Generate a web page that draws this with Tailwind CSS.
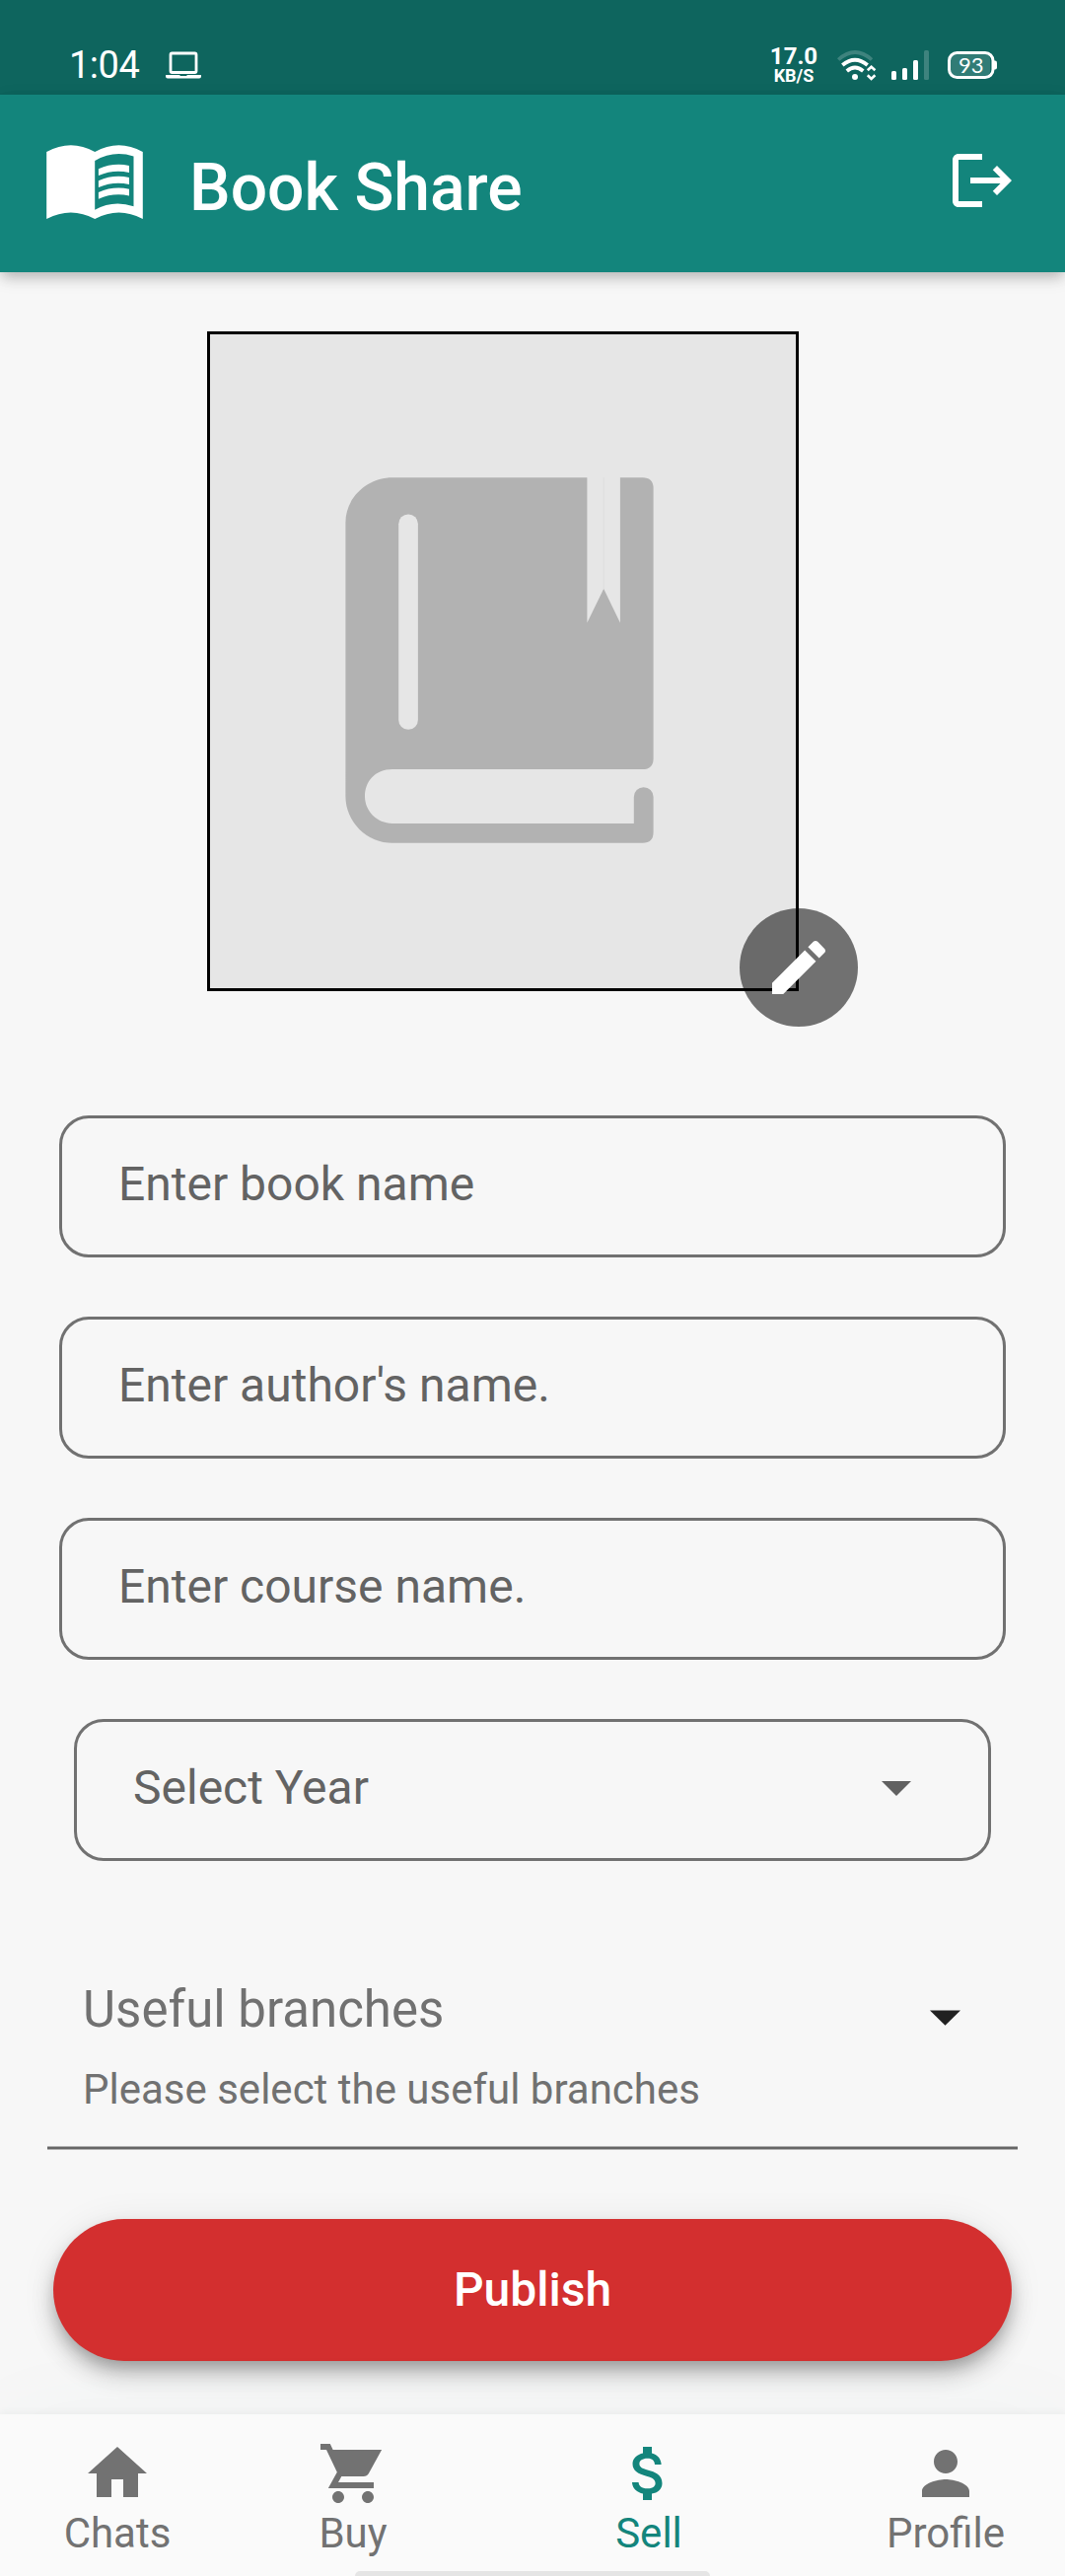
<!DOCTYPE html>
<html lang="en">
<head>
<meta charset="utf-8">
<title>Book Share</title>
<script src="https://cdn.jsdelivr.net/npm/@tailwindcss/browser@4"></script>
</head>
<body class="bg-[#f7f7f7] font-['Roboto',sans-serif]">
<div class="flex h-[2612px] w-[1080px] flex-col overflow-hidden bg-[#f7f7f7]">

  <!-- Status bar -->
  <div class="z-10 flex h-24 shrink-0 items-start bg-[#0e655e] text-white">
    <div class="ml-[70px] mt-[44px] w-[98px] text-[38px] leading-[44px] tracking-[-0.5px]">1:04</div>
    <svg class="mt-[52px]" width="36" height="28" viewBox="0 0 36 28" fill="none">
      <rect x="5" y="2" width="26" height="19.5" rx="1.5" stroke="#fff" stroke-width="2.8"/>
      <path d="M0 24h36v1.5q0 2-2 2H2q-2 0-2-2z" fill="#fff"/>
      <path d="M14.500 24h7v1h-7z" fill="#0e655e"/>
    </svg>
    <div class="ml-[576px] mt-[45px] flex w-[50px] flex-col items-center font-bold">
      <span class="text-[24px] leading-[25px]">17.0</span>
      <span class="text-[18px] leading-[13px]">KB/S</span>
    </div>
    <svg class="ml-[18px] mt-[50px]" width="42" height="33" viewBox="848 50 42 33" fill="none" stroke="#fff">
      <path d="M850.200 60.500Q867 45.500 884 60.500" stroke-width="3.600" stroke-opacity=".2"/>
      <path d="M854.300 66Q867 55.500 879.700 66" stroke-width="3.800"/>
      <path d="M858.800 72Q867 65 875.300 72" stroke-width="3.800"/>
      <circle cx="867" cy="78" r="3" fill="#fff" stroke="none"/>
      <path d="M879.800 71.300l3.800-3.600 3.800 3.600M879.800 76.300l3.800 3.600 3.800-3.600" stroke-width="2.600"/>
    </svg>
    <svg class="ml-[14px] mt-[51px]" width="38" height="30" viewBox="0 0 38 30" fill="#fff">
      <rect x="0" y="21" width="5" height="9" rx="1.500"/>
      <rect x="11" y="18" width="5" height="12" rx="1.500"/>
      <rect x="22" y="10" width="5" height="20" rx="1.500"/>
      <rect x="33" y="0" width="5" height="30" rx="1.500" fill-opacity=".2"/>
    </svg>
    <div class="ml-[19px] mt-[52px] grid">
      <svg class="col-start-1 row-start-1" width="50" height="28" viewBox="0 0 50 28">
        <rect x="2" y="2" width="41" height="24" rx="6" fill="#fff" fill-opacity=".15"/>
        <rect x="1.500" y="1.500" width="44.500" height="25" rx="8" fill="none" stroke="#fff" stroke-width="3"/>
        <path d="M46 9.500h2q2 0 2 2v5q0 2-2 2h-2z" fill="#fff"/>
      </svg>
      <span class="col-start-1 row-start-1 pl-[11px] font-['Lato',sans-serif] text-[22px] leading-[27px]">93</span>
    </div>
  </div>

  <!-- App bar -->
  <header class="z-10 flex h-[180px] shrink-0 items-start bg-[#13857c] text-white shadow-[0_6px_12px_-3px_rgba(0,0,0,0.18),0_9px_15px_rgba(0,0,0,0.08),0_3px_18px_rgba(0,0,0,0.06)]">
    <svg class="ml-[47px] mt-[51px]" width="98" height="76" viewBox="47 147 98 76">
      <path fill="#fff" fill-rule="evenodd" d="M47.200 154Q72 140.500 96.200 154Q120.500 140.500 144.800 154V222Q120.500 209 96.200 222Q72 209 47.200 222ZM96.200 163V212.700Q115 202.500 135.500 209.300V158.500Q115 152 96.200 163Z"/>
      <path fill="#fff" d="M99.900 171.300Q115 164.500 131 168V175Q115 171.500 99.900 178ZM99.900 183.300Q115 176.500 131 180V187Q115 183.500 99.900 190ZM99.900 195Q115 188.300 131 191.700V198.500Q115 195 99.900 201.700Z"/>
    </svg>
    <h1 class="ml-[47px] mt-[55px] text-[66px] font-medium leading-[80px]">Book Share</h1>
    <svg class="ml-auto mr-12 mt-[51px]" width="72" height="72" viewBox="0 0 24 24" fill="#fff">
      <path d="m17 7-1.410 1.410L18.170 11H8v2h10.170l-2.580 2.580L17 17l5-5zM4 5h8V3H4c-1.100 0-2 .9-2 2v14c0 1.100.9 2 2 2h8v-2H4z"/>
    </svg>
  </header>

  <main class="flex grow flex-col px-[60px] pt-[60px]">
    <!-- Cover picker -->
    <div class="relative ml-[150px] h-[669px] w-[600px] border-[3px] border-black bg-[#e6e6e6]">
      <svg class="ml-[137px] mt-[145px]" width="314" height="372" viewBox="350 484 314 372">
        <path fill="#b2b2b2" d="M398 484.300H651.600Q662.600 484.300 662.600 495.300V769Q662.600 780.100 651.600 780.100H398C380 780.100 370 793 370 807.500C370 822 382 834.900 398 834.900H642.800V808A9.900 9.900 0 0 1 662.600 808V843.700Q662.600 854.700 651.600 854.700H398A47.500 47.500 0 0 1 350.400 807.500V530C350.400 504 373 484.300 398 484.300Z"/>
        <rect x="404.200" y="521.500" width="19.700" height="218.300" rx="9.800" fill="#e6e6e6"/>
        <path fill="#e6e6e6" d="M595.400 484H628.900V631.500L612.200 597L595.400 631.500Z"/>
        <path d="M612.200 484V597" stroke="#dcdcdc" stroke-width=".8"/>
      </svg>
      <button class="absolute -bottom-[39px] -right-[63px] flex size-[120px] items-center justify-center rounded-full bg-black/54" aria-label="Edit cover">
        <svg width="72" height="72" viewBox="0 0 24 24" fill="#fff">
          <path d="M3 17.250V21h3.750L17.810 9.940l-3.750-3.750L3 17.250zM20.710 7.040c.39-.39.39-1.020 0-1.410l-2.340-2.340c-.39-.39-1.020-.39-1.410 0l-1.830 1.830 3.750 3.750 1.830-1.830z"/>
        </svg>
      </button>
    </div>

    <!-- Form fields -->
    <div class="mt-[126px] flex flex-col gap-[60px] text-[48px] leading-[56px] text-[#636363]">
      <div class="flex h-36 items-center rounded-[30px] border-[3px] border-[#717171] pb-[5px] pl-[57px]">Enter book name</div>
      <div class="flex h-36 items-center rounded-[30px] border-[3px] border-[#717171] pb-[5px] pl-[57px]">Enter author's name.</div>
      <div class="flex h-36 items-center rounded-[30px] border-[3px] border-[#717171] pb-[5px] pl-[57px]">Enter course name.</div>
      <div class="mx-[15px] flex h-36 items-center justify-between rounded-[30px] border-[3px] border-[#717171] pb-[5px] pl-[57px] pr-[78px]">
        <span>Select Year</span>
        <svg class="mt-[2px]" width="30" height="15" viewBox="0 0 30 15" fill="#616161"><path d="M0 0h30L15 15z"/></svg>
      </div>
    </div>

    <!-- Branch selector -->
    <div class="-mx-3 mt-[117px] h-[176px] border-b border-[#b0b0b0] pl-9 pt-1 text-[#717171]">
      <div class="flex items-center justify-between pr-[58px]">
        <span class="text-[51px] leading-[60px]">Useful branches</span>
        <svg class="mt-[16px]" width="31" height="16" viewBox="0 0 31 16" fill="#212121"><path d="M0 .4h31L15.500 15.700z"/></svg>
      </div>
      <div class="mt-[26px] text-[42px] leading-[50px]">Please select the useful branches</div>
      <div class="-ml-9 mt-[32px] h-[3px] border-t border-[#b0b0b0] bg-[#666]"></div>
    </div>

    <button class="-mx-1.5 mt-[70px] h-36 shrink-0 rounded-full bg-[#d32f2f] text-[48px] font-medium leading-[56px] text-white shadow-[0_9px_15px_-3px_rgba(0,0,0,0.22),0_15px_24px_rgba(0,0,0,0.16),0_3px_36px_rgba(0,0,0,0.08)]">Publish</button>
  </main>

  <!-- Bottom navigation -->
  <nav class="z-10 flex h-[164px] shrink-0 flex-col justify-between bg-[#fafafa] shadow-[0_-2px_8px_rgba(0,0,0,0.04),0_0_100px_rgba(19,133,124,0.03)]">
    <div class="grid grid-cols-[238px_240px_360px_242px] pt-6 text-[42px] leading-[50px] text-[#727272]">
      <div class="flex flex-col items-center">
        <svg width="72" height="72" viewBox="0 0 24 24" fill="currentColor"><path d="M10 20v-6h4v6h5v-8h3L12 3 2 12h3v8z"/></svg>
        <span>Chats</span>
      </div>
      <div class="flex flex-col items-center">
        <svg width="72" height="72" viewBox="0 0 24 24" fill="currentColor"><path d="M7 18c-1.100 0-1.990.9-1.990 2S5.900 22 7 22s2-.9 2-2-.9-2-2-2zM1 2v2h2l3.600 7.590L3.620 17H19v-2H7l1.100-2h7.450c.75 0 1.410-.41 1.750-1.030L21.700 4H5.210l-.94-2H1zm16 16c-1.100 0-1.990.9-1.990 2s.89 2 1.990 2 2-.9 2-2-.9-2-2-2z"/></svg>
        <span>Buy</span>
      </div>
      <div class="flex flex-col items-center text-[#13857c]">
        <svg width="72" height="72" viewBox="0 0 24 24" fill="currentColor"><path d="M11.800 10.900c-2.270-.59-3-1.200-3-2.150 0-1.090 1.010-1.850 2.700-1.850 1.780 0 2.440.85 2.500 2.100h2.210c-.07-1.720-1.120-3.300-3.210-3.810V3h-3v2.160c-1.940.42-3.500 1.680-3.500 3.610 0 2.310 1.910 3.460 4.700 4.130 2.500.6 3 1.480 3 2.410 0 .69-.49 1.790-2.700 1.790-2.060 0-2.870-.92-2.980-2.100h-2.200c.12 2.190 1.760 3.420 3.680 3.830V21h3v-2.150c1.950-.37 3.500-1.500 3.500-3.550 0-2.840-2.430-3.810-4.700-4.400z"/></svg>
        <span>Sell</span>
      </div>
      <div class="flex flex-col items-center">
        <svg width="72" height="72" viewBox="0 0 24 24" fill="currentColor"><path d="M12 12c2.210 0 4-1.790 4-4s-1.790-4-4-4-4 1.790-4 4 1.790 4 4 4zm0 2c-2.670 0-8 1.340-8 4v2h16v-2c0-2.660-5.330-4-8-4z"/></svg>
        <span>Profile</span>
      </div>
    </div>
    <div class="mx-auto h-[5px] w-[360px] shrink-0 rounded-t-[5px] bg-[#e5e5e5]"></div>
  </nav>
</div>
</body>
</html>
